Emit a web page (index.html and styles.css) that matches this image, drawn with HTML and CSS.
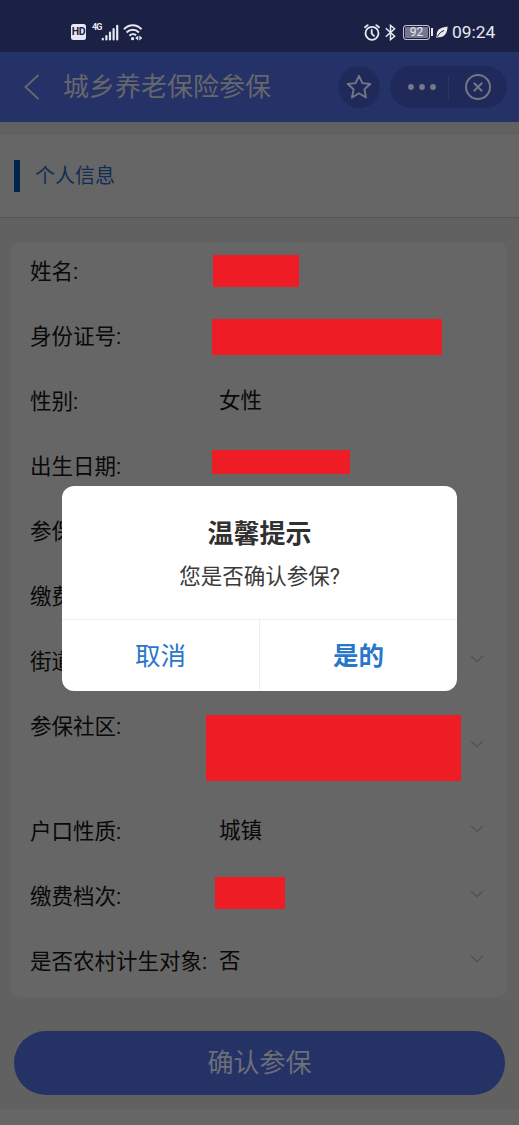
FILE: index.html
```html
<!DOCTYPE html>
<html lang="zh-CN">
<head>
<meta charset="utf-8">
<title>城乡养老保险参保</title>
<link rel="stylesheet" href="styles.css">
</head>
<body>
<div class="phone">
  <header class="status">
    <div class="status-left">
      <span class="hd">HD</span>
      <span class="gen">4G</span>
      <svg class="signal" width="18" height="17" viewBox="0 0 18 17" stroke="#e8e8f2" stroke-width="2.2" stroke-linecap="round"><path d="M1.8 14.8v.6M5.4 12v3.4M9 8.5v6.9M12.6 5v10.4M16.2 1.8v13.6"/></svg>
      <svg class="wifi" width="20" height="17" viewBox="0 0 20 17" fill="none" stroke="#e8e8f2" stroke-width="2"><path d="M1 5.2C6-.1 13.500-.1 18.500 5.200M3.600 8.500c3.400-3.600 8.900-3.600 12.300 0M6.500 11.700c1.800-1.900 4.600-2 6.600-.4"/><circle cx="9.600" cy="14.700" r="1.600" fill="#e8e8f2" stroke="none"/><path d="M15.200 11.500v5l-3-2.500zM16.300 11.500v5l3-2.500z" fill="#e8e8f2" stroke="none"/></svg>
    </div>
    <div class="status-right">
      <svg width="16" height="17" viewBox="0 0 16 17" fill="none" stroke="#e8e8f2" stroke-width="1.800" stroke-linecap="round"><circle cx="8" cy="9.300" r="6.500"/><path d="M7.700 5.800v3.800l2.300 2.200M1 3.300L3.700 1.100M15 3.300L12.300 1.100"/></svg>
      <svg class="bluetooth" width="11" height="17" viewBox="0 0 11 17" fill="none" stroke="#e8e8f2" stroke-width="1.500"><path d="M.8 4.300l8.800 8-4.100 3.300V1.400l4.100 3.300-8.800 8"/></svg>
      <span class="battery">92</span><span class="battery-tip"></span>
      <svg class="leaf" width="12" height="13" viewBox="0 0 12 13"><path d="M11.600.5C4.500 1.300.4 3.700.7 9.300L.3 12.300l1.700-1.100c6.600.6 9.200-3.800 9.600-10.700z" fill="#e8e8f2"/><path d="M1.500 10.500C3 7.500 5 5.700 8 4.500" fill="none" stroke="#1a2144"/></svg>
      <span class="clock">09:24</span>
    </div>
  </header>

  <nav class="nav">
    <svg class="back" width="16" height="26" viewBox="0 0 16 26" fill="none" stroke="#66676b" stroke-width="1.900"><path d="M14.500 1L1.500 13l13 12"/></svg>
    <h1 class="nav-title">城乡养老保险参保</h1>
    <div class="star"><svg width="26" height="26" viewBox="0 0 26 26" fill="none" stroke="#737684" stroke-width="1.900" stroke-linejoin="round"><path d="M13 1.800l3.400 7.300 7.900.9-5.900 5.300 1.600 8.200-7-4.200-7 4.200 1.600-8.200L1.700 10l7.900-.9z"/></svg></div>
    <div class="capsule">
      <svg class="dots" width="28" height="6" viewBox="0 0 28 6" fill="#777985"><circle cx="3" cy="3" r="2.900"/><circle cx="14" cy="3" r="2.900"/><circle cx="25" cy="3" r="2.900"/></svg>
      <span class="divider"></span>
      <svg class="close" width="28" height="28" viewBox="0 0 28 28" fill="none" stroke="#737684" stroke-width="2"><circle cx="14" cy="14" r="12"/><path d="M9.800 9.800l8.400 8.400M18.200 9.800l-8.400 8.400"/></svg>
    </div>
  </nav>

  <section class="section-head"><span class="mark"></span><h2 class="section-title">个人信息</h2></section>

  <main class="card">
    <div class="row"><span class="label">姓名:</span><span class="block block-name"></span></div>
    <div class="row"><span class="label">身份证号:</span><span class="block block-id"></span></div>
    <div class="row"><span class="label">性别:</span><span class="value">女性</span></div>
    <div class="row"><span class="label">出生日期:</span><span class="block block-birth"></span></div>
    <div class="row"><span class="label">参保</span></div>
    <div class="row"><span class="label">缴费</span></div>
    <div class="row"><span class="label">街道</span><svg class="chevron" viewBox="0 0 14 8"><path d="M1 1l6 5.500L13 1"/></svg></div>
    <div class="row row-tall"><span class="label">参保社区:</span><span class="block block-area"></span><svg class="chevron" viewBox="0 0 14 8"><path d="M1 1l6 5.500L13 1"/></svg></div>
    <div class="row"><span class="label">户口性质:</span><span class="value">城镇</span><svg class="chevron" viewBox="0 0 14 8"><path d="M1 1l6 5.500L13 1"/></svg></div>
    <div class="row"><span class="label">缴费档次:</span><span class="block block-level"></span><svg class="chevron" viewBox="0 0 14 8"><path d="M1 1l6 5.500L13 1"/></svg></div>
    <div class="row"><span class="label">是否农村计生对象:</span><span class="value">否</span><svg class="chevron" viewBox="0 0 14 8"><path d="M1 1l6 5.500L13 1"/></svg></div>
  </main>

  <button class="submit">确认参保</button>
  <footer class="bottom"></footer>

  <div class="dialog">
    <div class="dialog-body">
      <h3 class="dialog-title">温馨提示</h3>
      <p class="dialog-text">您是否确认参保?</p>
    </div>
    <div class="dialog-actions">
      <button class="action">取消</button>
      <button class="action action-main">是的</button>
    </div>
  </div>
</div>
</body>
</html>
```
FILE: styles.css
```css
* { box-sizing: border-box; }
body, h1, h2, h3, p { margin: 0; }
h1, h2 { font-weight: 400; }
body { font-family: Roboto, "Noto Sans CJK SC", sans-serif; }
button { border: 0; padding: 0; font-family: inherit; }
svg { display: block; flex: none; }

.phone {
  position: relative;
  display: flex;
  flex-direction: column;
  width: 519px;
  height: 1125px;
  overflow: hidden;
  background: #616161;
}

.status {
  display: flex;
  justify-content: space-between;
  height: 52px;
  padding: 12px 24px 0 71px;
  background: #1a2144;
  color: #e8e8f2;
}
.status-left, .status-right { display: flex; align-items: center; height: 40px; }
.hd {
  width: 15px;
  height: 16px;
  border-radius: 2.5px;
  background: #e8e8f2;
  color: #1a2144;
  font-size: 10.5px;
  font-weight: 700;
  line-height: 16px;
  text-align: center;
  letter-spacing: -0.4px;
}
.gen { align-self: flex-start; margin: 10px 0 0 6px; width: 9px; font-size: 9px; font-weight: 700; line-height: 11px; letter-spacing: -1px; }
.signal { margin-left: 0; }
.wifi { margin-left: 4px; }
.bluetooth { margin-left: 5px; }
.battery {
  width: 27px;
  height: 15px;
  margin-left: 7px;
  border: 1px solid #c5c6d2;
  border-radius: 3px;
  background: #74778e;
  box-shadow: inset 0 0 0 1px #1a2144;
  font-size: 12px;
  line-height: 13px;
  text-align: center;
}
.battery-tip { width: 2px; height: 8px; margin-left: 1px; background: #e8e8f2; }
.leaf { margin-left: 3px; }
.clock { width: 43px; margin-left: 4px; font-size: 17.4px; line-height: 20px; white-space: nowrap; }

.nav { display: flex; align-items: center; height: 70px; padding: 0 12px 0 24px; background: #253268; }
.nav-title { margin-left: 23px; width: 212px; color: #66676b; font-size: 26px; line-height: 36px; white-space: nowrap; }
.star { display: grid; place-items: center; width: 42px; height: 42px; margin-left: 63px; border-radius: 50%; background: #202a5a; }
.capsule { display: flex; align-items: center; width: 117px; height: 42px; margin-left: 10px; padding-left: 18px; border-radius: 21px; background: #202a5a; }
.divider { width: 1px; height: 23px; margin-left: 12px; background: #2c3765; }
.close { margin-left: 15px; }

.section-head {
  display: flex;
  align-items: center;
  height: 83px;
  margin-top: 13px;
  padding-left: 14px;
  border-bottom: 1px solid #555;
  background: #666;
}
.mark { width: 6px; height: 32px; background: #002348; }
.section-title { margin-left: 15px; color: #112d55; font-size: 20px; line-height: 28px; }

.card { height: 755px; margin: 24px 12px 0 11px; border-radius: 9px; background: #666; color: #090909; font-size: 21.5px; }
.row { display: flex; align-items: flex-start; height: 65px; padding: 0 23px 0 19px; }
.row-tall { height: 105px; }
.label { flex: none; width: 189px; line-height: 60px; white-space: nowrap; }
.value { line-height: 58px; }
.block { background: #ee1c24; }
.block-name { width: 86px; height: 32px; margin: 13px 0 0 -6px; }
.block-id { width: 230px; height: 36px; margin: 12px 0 0 -7px; }
.block-birth { width: 138px; height: 24px; margin: 13px 0 0 -7px; }
.block-area { width: 255px; height: 66px; margin: 18px 0 0 -13px; }
.block-level { width: 70px; height: 32px; margin: 10px 0 0 -4px; }
.chevron { width: 14px; height: 8px; margin: 23px 0 0 auto; fill: none; stroke: #535353; stroke-width: 1.4; }
.row-tall .chevron { margin-top: 43px; }

.submit {
  height: 64px;
  margin: 34px 14px 0;
  border-radius: 32px;
  background: #253265;
  color: #6c6e78;
  font-size: 26px;
  line-height: 64px;
}
.bottom { height: 16px; margin-top: 14px; background: #666; }

.dialog {
  position: absolute;
  top: 486px;
  left: 62px;
  display: flex;
  flex-direction: column;
  width: 395px;
  height: 205px;
  overflow: hidden;
  border-radius: 12px;
  background: #fff;
}
.dialog-body { height: 133px; padding-top: 29px; text-align: center; }
.dialog-title { color: #303030; font-size: 26px; font-weight: 700; line-height: 38px; }
.dialog-text { margin-top: 8px; color: #3b3b3b; font-size: 21.5px; line-height: 32px; }
.dialog-actions { display: flex; flex: 1; border-top: 1px solid #eee; }
.action { flex: 1; background: none; color: #2877cb; font-size: 25.5px; line-height: 36px; }
.action-main { border-left: 1px solid #eee; font-weight: 700; }
```
